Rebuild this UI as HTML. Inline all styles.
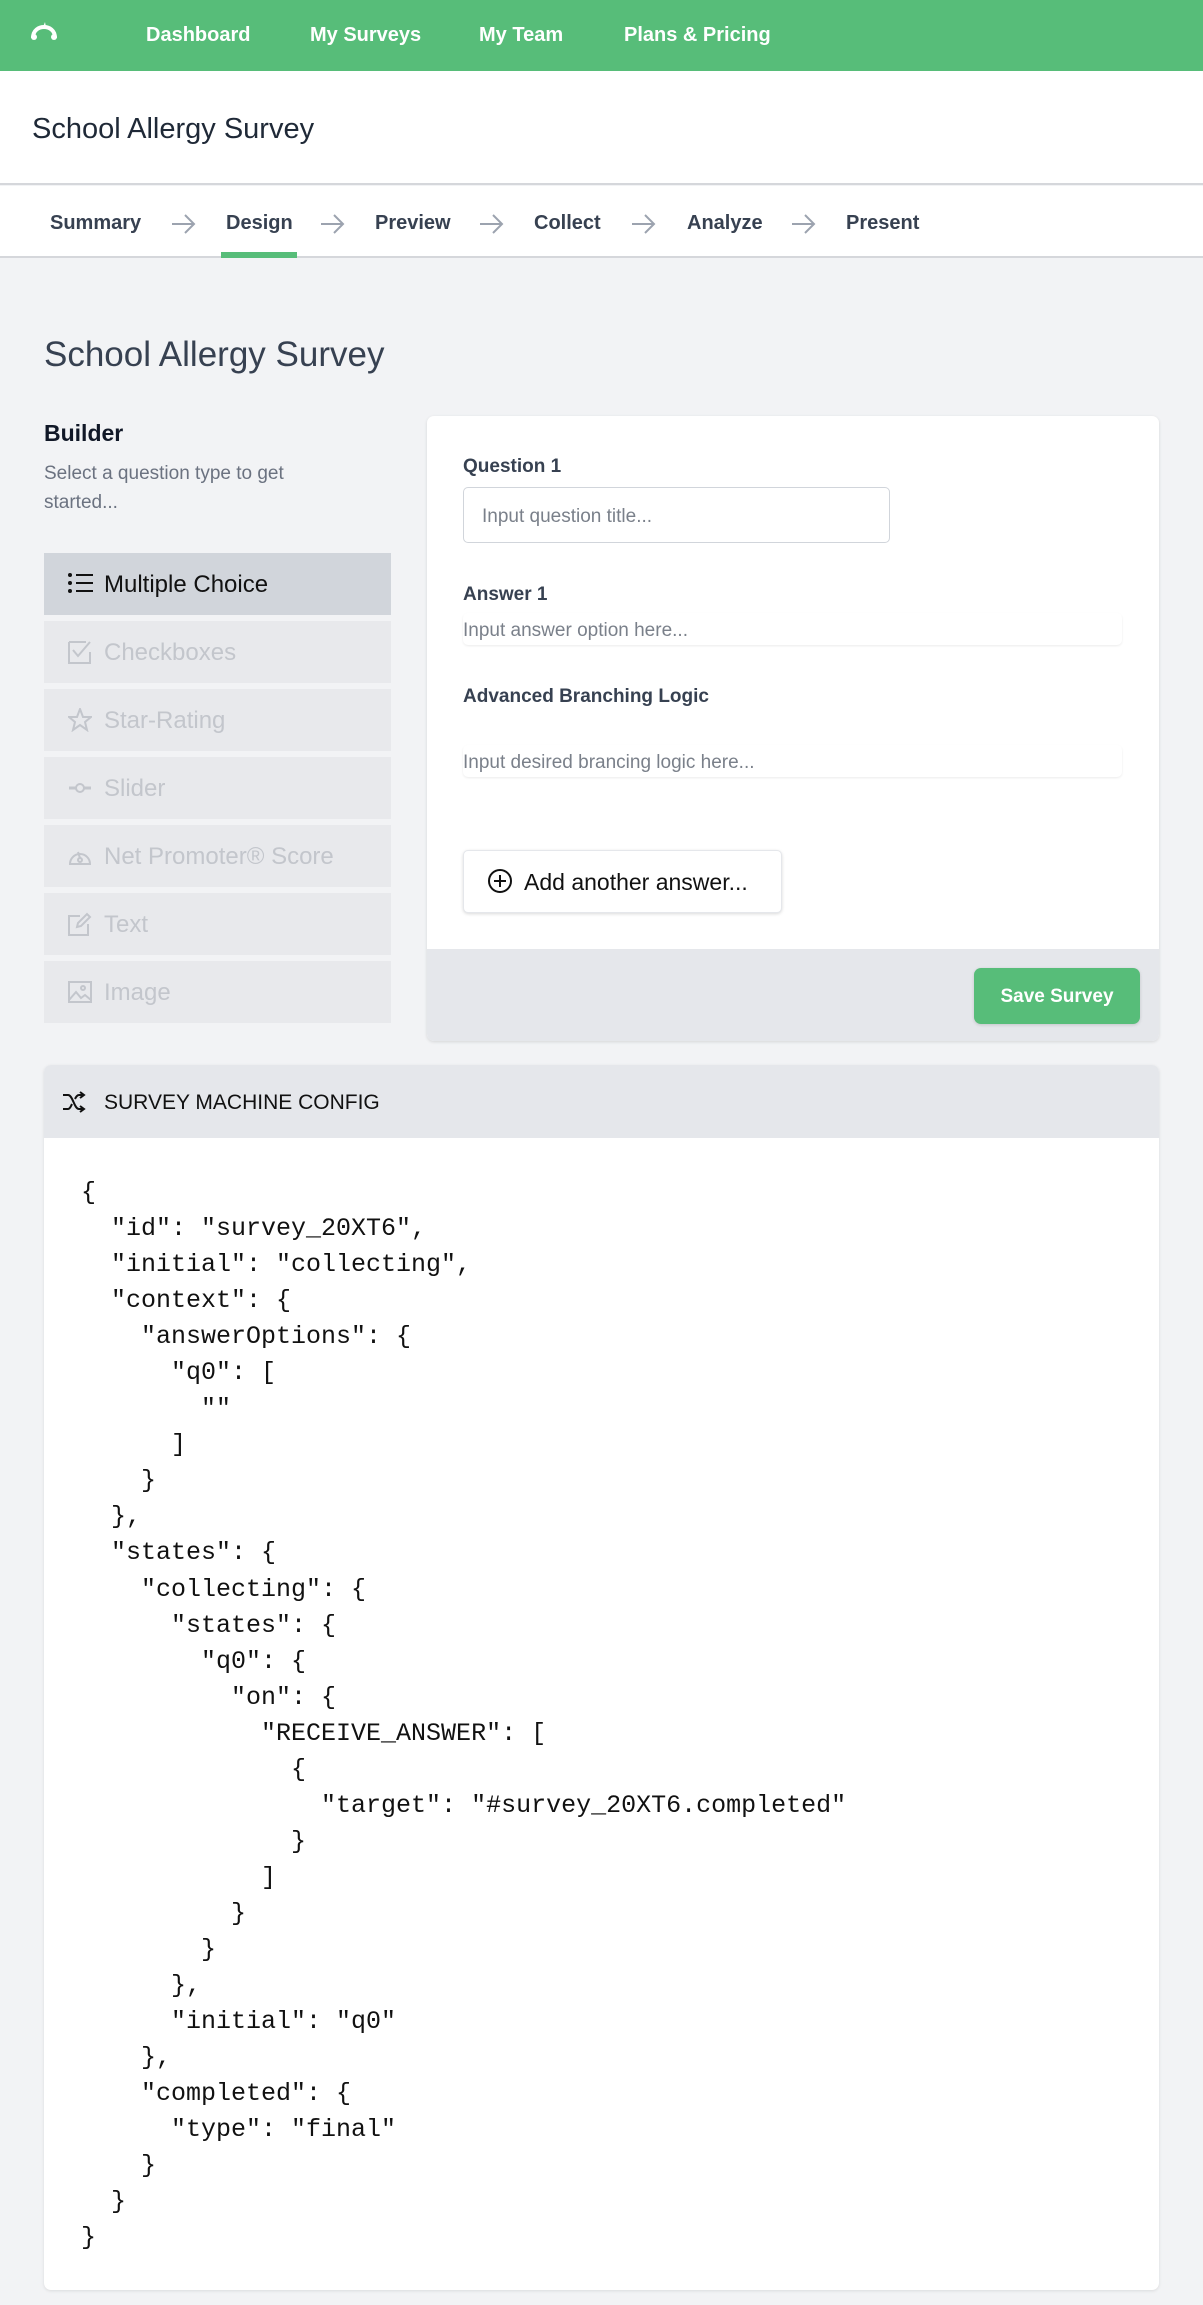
<!DOCTYPE html>
<html><head><meta charset="utf-8"><style>
*{box-sizing:border-box;margin:0;padding:0}
body{width:1203px;height:2305px;background:#f2f3f5;font-family:"Liberation Sans",sans-serif;position:relative;overflow:hidden;color:#1f2937}
.a{position:absolute;white-space:nowrap}
.nav{position:absolute;left:0;top:0;width:1203px;height:71px;background:#57bd79}
.nav .a{color:#fff;font-weight:bold;font-size:20px;top:24px}
.hdr{position:absolute;left:0;top:71px;width:1203px;height:114px;background:#fff;border-bottom:2px solid #d5d7db}
.tabs{position:absolute;left:0;top:186px;width:1203px;height:72px;background:#fff;border-bottom:2px solid #d5d7db}
.tabs .a{font-weight:bold;font-size:20px;color:#374151;top:26px}
.tabs svg{position:absolute;top:27px}
.item{position:absolute;left:44px;width:347px;height:62px;background:#e8e9ec;color:#c3c6cc;font-size:24px}
.item span{position:absolute;left:60px;top:18px}
.item svg{position:absolute;left:24px;top:19px}
.lbl{font-weight:bold;font-size:19px;color:#374151}
.ph{font-size:19px;color:#7a808a}
.code{position:absolute;left:81px;top:1175px;font-family:"Liberation Mono",monospace;font-size:25px;line-height:36.05px;color:#111;white-space:pre}
</style></head><body>
<div class="nav">
<svg class="a" style="left:30px;top:22px" width="28" height="20" viewBox="0 0 28 20"><path d="M3 16 C3 8 9 5 14 5 C19 5 25 8 25 16" fill="none" stroke="#fff" stroke-width="4"/><circle cx="4" cy="15" r="3" fill="#fff"/><circle cx="24" cy="15" r="3" fill="#fff"/><path d="M13 5 L15 0 L16 5Z" fill="#fff"/></svg>
<div class="a" style="left:146px">Dashboard</div>
<div class="a" style="left:310px">My Surveys</div>
<div class="a" style="left:479px">My Team</div>
<div class="a" style="left:624px">Plans &amp; Pricing</div>
</div>
<div class="hdr"><div class="a" style="left:32px;top:42px;font-size:29px;font-weight:300;color:#1f2937">School Allergy Survey</div></div>
<div class="tabs">
<div class="a" style="left:50px">Summary</div>
<div class="a" style="left:226px">Design</div>
<div class="a" style="left:375px">Preview</div>
<div class="a" style="left:534px">Collect</div>
<div class="a" style="left:687px">Analyze</div>
<div class="a" style="left:846px">Present</div>
<svg style="left:171px" width="26" height="22" viewBox="0 0 26 22"><path d="M1 11 H23 M14 2 L23 11 L14 20" fill="none" stroke="#9ca3af" stroke-width="2"/></svg>
<svg style="left:320px" width="26" height="22" viewBox="0 0 26 22"><path d="M1 11 H23 M14 2 L23 11 L14 20" fill="none" stroke="#9ca3af" stroke-width="2"/></svg>
<svg style="left:479px" width="26" height="22" viewBox="0 0 26 22"><path d="M1 11 H23 M14 2 L23 11 L14 20" fill="none" stroke="#9ca3af" stroke-width="2"/></svg>
<svg style="left:631px" width="26" height="22" viewBox="0 0 26 22"><path d="M1 11 H23 M14 2 L23 11 L14 20" fill="none" stroke="#9ca3af" stroke-width="2"/></svg>
<svg style="left:791px" width="26" height="22" viewBox="0 0 26 22"><path d="M1 11 H23 M14 2 L23 11 L14 20" fill="none" stroke="#9ca3af" stroke-width="2"/></svg>
<div class="a" style="left:221px;top:66px;width:76px;height:6px;background:#57bd79"></div>
</div>
<div class="a" style="left:44px;top:335px;font-size:35px;font-weight:300;color:#374151">School Allergy Survey</div>
<div class="a" style="left:44px;top:420px;font-size:23px;font-weight:bold;color:#111827">Builder</div>
<div class="a" style="left:44px;top:459px;font-size:19px;line-height:29px;color:#6b7280;white-space:normal;width:290px">Select a question type to get started...</div>

<div class="item" style="top:553px;background:#d1d5db;color:#111">
<svg width="26" height="22" viewBox="0 0 26 22"><circle cx="2" cy="3" r="2" fill="#111"/><circle cx="2" cy="11" r="2" fill="#111"/><circle cx="2" cy="19" r="2" fill="#111"/><path d="M8 3H25M8 11H25M8 19H25" stroke="#111" stroke-width="2"/></svg><span>Multiple Choice</span></div>
<div class="item" style="top:621px"><svg width="24" height="24" viewBox="0 0 24 24"><path d="M1 2H18M1 2V23H22V12" fill="none" stroke="#c3c6cc" stroke-width="2"/><path d="M5 10L10 16L22 2" fill="none" stroke="#c3c6cc" stroke-width="2"/></svg><span>Checkboxes</span></div>
<div class="item" style="top:689px"><svg width="24" height="24" viewBox="0 0 24 24"><path d="M12 1L15 9H23L17 14L19 22L12 17L5 22L7 14L1 9H9Z" fill="none" stroke="#c3c6cc" stroke-width="2"/></svg><span>Star-Rating</span></div>
<div class="item" style="top:757px"><svg width="24" height="24" viewBox="0 0 24 24"><path d="M1 12H8M16 12H23" stroke="#c3c6cc" stroke-width="3"/><circle cx="12" cy="12" r="4" fill="none" stroke="#c3c6cc" stroke-width="2"/></svg><span>Slider</span></div>
<div class="item" style="top:825px"><svg width="24" height="24" viewBox="0 0 24 24"><path d="M2 20A10 10 0 1 1 22 20Z" fill="none" stroke="#c3c6cc" stroke-width="2"/><circle cx="12" cy="16" r="2" fill="none" stroke="#c3c6cc" stroke-width="2"/><path d="M12 14L10 8" stroke="#c3c6cc" stroke-width="2"/></svg><span>Net Promoter® Score</span></div>
<div class="item" style="top:893px"><svg width="24" height="24" viewBox="0 0 24 24"><path d="M12 4H1V23H20V12" fill="none" stroke="#c3c6cc" stroke-width="2"/><path d="M9 15L10 11L19 2L22 5L13 14Z" fill="none" stroke="#c3c6cc" stroke-width="2"/></svg><span>Text</span></div>
<div class="item" style="top:961px"><svg width="24" height="24" viewBox="0 0 24 24"><rect x="1" y="2" width="22" height="20" fill="none" stroke="#c3c6cc" stroke-width="2"/><path d="M1 20L8 12L13 18L17 15L23 20" fill="none" stroke="#c3c6cc" stroke-width="2"/><circle cx="15" cy="8" r="2" fill="none" stroke="#c3c6cc" stroke-width="2"/></svg><span>Image</span></div>

<div class="a" style="left:427px;top:416px;width:732px;height:625px;background:#fff;border-radius:7px;box-shadow:0 1px 3px rgba(0,0,0,.12);overflow:hidden">
<div class="a" style="left:0;top:533px;width:732px;height:92px;background:#e5e7eb"></div>
</div>
<div class="a lbl" style="left:463px;top:456px">Question 1</div>
<div class="a" style="left:463px;top:487px;width:427px;height:56px;border:1.5px solid #d1d5db;border-radius:5px;background:#fff"></div>
<div class="a ph" style="left:482px;top:506px">Input question title...</div>
<div class="a lbl" style="left:463px;top:584px">Answer 1</div>
<div class="a" style="left:463px;top:613px;width:659px;height:32px;border-radius:5px;box-shadow:0 1px 2px rgba(0,0,0,.08)"></div>
<div class="a ph" style="left:463px;top:620px">Input answer option here...</div>
<div class="a lbl" style="left:463px;top:686px">Advanced Branching Logic</div>
<div class="a" style="left:463px;top:745px;width:659px;height:32px;border-radius:5px;box-shadow:0 1px 2px rgba(0,0,0,.08)"></div>
<div class="a ph" style="left:463px;top:752px">Input desired brancing logic here...</div>
<div class="a" style="left:463px;top:850px;width:319px;height:63px;background:#fff;border:1px solid #e5e7eb;border-radius:5px;box-shadow:0 1px 3px rgba(0,0,0,.15)"></div>
<svg class="a" style="left:487px;top:868px" width="26" height="26" viewBox="0 0 26 26"><circle cx="13" cy="13" r="11" fill="none" stroke="#111" stroke-width="2"/><path d="M13 7V19M7 13H19" stroke="#111" stroke-width="2"/></svg>
<div class="a" style="left:524px;top:869px;font-size:23px;color:#111">Add another answer...</div>
<div class="a" style="left:974px;top:968px;width:166px;height:56px;background:#57bd79;border-radius:7px;box-shadow:0 1px 3px rgba(0,0,0,.15);color:#fff;font-weight:bold;font-size:19px;text-align:center;line-height:58px">Save Survey</div>

<div class="a" style="left:44px;top:1065px;width:1115px;height:1225px;background:#fff;border-radius:7px;box-shadow:0 1px 3px rgba(0,0,0,.1);overflow:hidden">
<div class="a" style="left:0;top:0;width:1115px;height:73px;background:#e5e7eb"></div>
</div>
<svg class="a" style="left:62px;top:1091px" width="24" height="22" viewBox="0 0 24 22"><path d="M1 4H6C11 4 12 18 17 18H22M1 18H6C8 18 9 15 10 13M13 8C14 6 15 4 17 4H22M18 1L22 4L18 7M18 15L22 18L18 21" fill="none" stroke="#111" stroke-width="2"/></svg>
<div class="a" style="left:104px;top:1091px;font-size:21px;color:#111">SURVEY MACHINE CONFIG</div>
<div class="code">{
  "id": "survey_20XT6",
  "initial": "collecting",
  "context": {
    "answerOptions": {
      "q0": [
        ""
      ]
    }
  },
  "states": {
    "collecting": {
      "states": {
        "q0": {
          "on": {
            "RECEIVE_ANSWER": [
              {
                "target": "#survey_20XT6.completed"
              }
            ]
          }
        }
      },
      "initial": "q0"
    },
    "completed": {
      "type": "final"
    }
  }
}</div>
</body></html>
